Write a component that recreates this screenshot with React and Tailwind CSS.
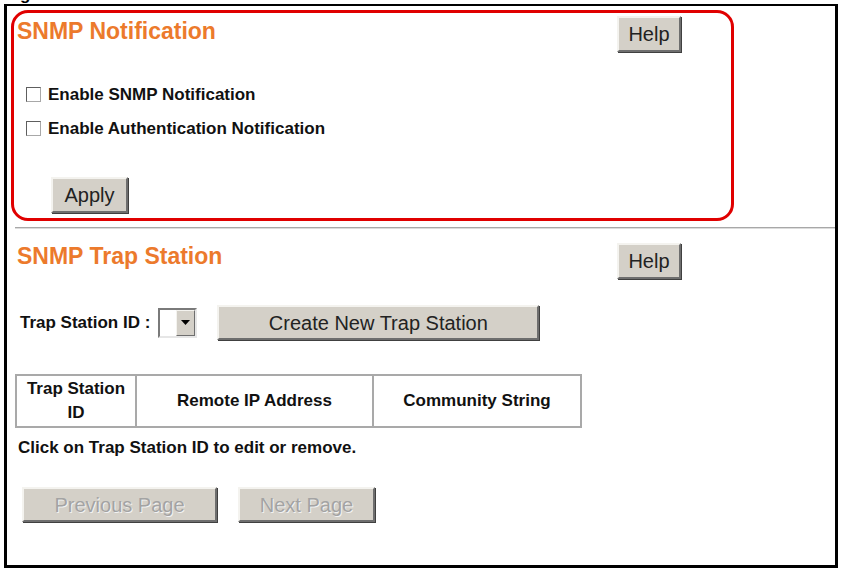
const font = "font-['Liberation_Sans',Arial,sans-serif]";

function WinButton({ children, className = "", disabled = false }) {
  return (
    <button
      type="button"
      className={`flex items-center justify-center bg-[#d4d0c8] border-2 border-t-[#f4f3ef] border-l-[#f4f3ef] border-b-[#6e6e6e] border-r-[#6e6e6e] shadow-[1px_1px_0_#404040] text-[20px] leading-none ${
        disabled ? "text-[#a3a3a3] [text-shadow:1px_1px_0_#f2f2f2]" : "text-[#222]"
      } ${className}`}
    >
      {children}
    </button>
  );
}

function CheckRow({ label }) {
  return (
    <div className="flex items-center h-[34px] pl-[19px] gap-[7px]">
      <span className="w-[15px] h-[15px] bg-white border border-t-[#5e5e5e] border-l-[#5e5e5e] border-b-[#a8a8a8] border-r-[#a8a8a8]" />
      <span className="text-[17px] font-bold text-[#111] leading-none">{label}</span>
    </div>
  );
}

function Title({ children, className = "" }) {
  return (
    <h2 className={`flex-1 self-start text-[23px] leading-none font-bold text-[#ec7a2c] ${className}`}>
      {children}
    </h2>
  );
}

export default function App() {
  return (
    <div className={`w-[843px] h-[573px] bg-white overflow-hidden ${font}`}>
      {/* caption cut off above the frame */}
      <div className="h-[4px] overflow-hidden pl-[5px]">
        <div className="mt-[-14px] text-[17px] leading-[17px] font-bold text-black">Figure</div>
      </div>

      <div className="relative ml-[4px] w-[834px] h-[564px] border-black border-l-[3px] border-t-2 border-r-[3px] border-b-[3px]">
        {/* red annotation around the first section */}
        <div className="absolute left-[4px] top-[4px] w-[723px] h-[211px] border-[3px] border-[#e00000] rounded-[17px] pointer-events-none" />

        {/* SNMP Notification */}
        <div className="flex items-center w-[674px] h-[36px] mt-[10px] pl-[10px]">
          <Title className="mt-[4px]">SNMP Notification</Title>
          <WinButton className="w-[64px] h-[36px]">Help</WinButton>
        </div>

        <div className="mt-[25px]">
          <CheckRow label="Enable SNMP Notification" />
          <CheckRow label="Enable Authentication Notification" />
        </div>

        <WinButton className="ml-[44px] mt-[32px] w-[77px] h-[36px]">Apply</WinButton>

        <div className="ml-[8px] mt-[14px] h-[2px] bg-[#a8a8a8] border-b border-[#dcdcdc]" />

        {/* SNMP Trap Station */}
        <div className="flex items-center w-[674px] h-[36px] mt-[14px] pl-[10px]">
          <Title className="mt-[2px]">SNMP Trap Station</Title>
          <WinButton className="w-[64px] h-[36px]">Help</WinButton>
        </div>

        <div className="flex items-center h-[35px] mt-[26px] pl-[13px]">
          <span className="text-[17px] font-bold text-[#111] leading-none">Trap Station ID :</span>
          <div className="ml-[8px] flex w-[39px] h-[30px] bg-white border-2 border-t-[#7a7a7a] border-l-[#7a7a7a] border-b-[#e6e6e6] border-r-[#e6e6e6]">
            <div className="flex-1" />
            <div className="w-[19px] flex items-center justify-center bg-[#d4d0c8] border border-t-[#f4f3ef] border-l-[#f4f3ef] border-b-[#6e6e6e] border-r-[#6e6e6e]">
              <svg width="9" height="5" viewBox="0 0 9 5">
                <path d="M0 0h9L4.5 5z" fill="#000" />
              </svg>
            </div>
          </div>
          <WinButton className="ml-[20px] w-[322px] h-[35px]">Create New Trap Station</WinButton>
        </div>

        <table className="ml-[8px] mt-[34px] w-[567px] h-[54px] border-collapse border-2 border-[#a9a9a9] text-[17px] font-bold text-[#111]">
          <thead>
            <tr>
              <th className="w-[120px] border-2 border-[#a9a9a9] leading-[24px] font-bold">
                Trap Station
                <br />
                ID
              </th>
              <th className="w-[237px] border-2 border-[#a9a9a9] font-bold">Remote IP Address</th>
              <th className="border-2 border-[#a9a9a9] font-bold">Community String</th>
            </tr>
          </thead>
        </table>

        <p className="mt-[10px] pl-[11px] text-[17px] leading-[20px] font-bold text-[#111]">
          Click on Trap Station ID to edit or remove.
        </p>

        <div className="flex gap-[21px] mt-[29px] ml-[15px]">
          <WinButton disabled className="w-[195px] h-[35px]">Previous Page</WinButton>
          <WinButton disabled className="w-[137px] h-[35px]">Next Page</WinButton>
        </div>
      </div>
    </div>
  );
}
